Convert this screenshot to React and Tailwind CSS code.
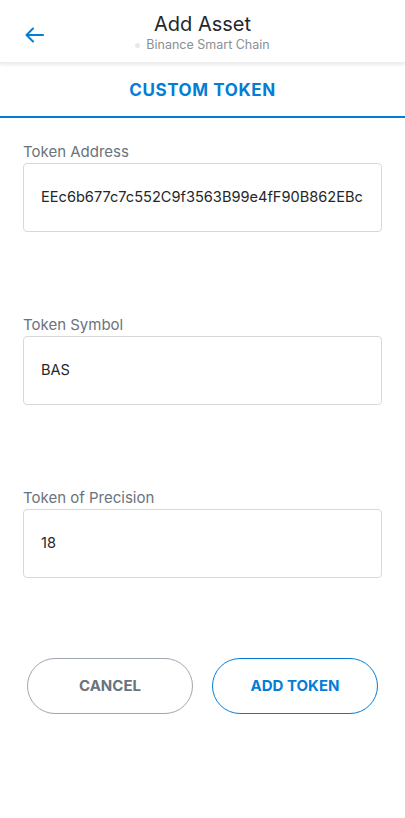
import React from "react";

function Field({ label, value }) {
  return (
    <div className="flex flex-col">
      <div className="text-[15px] leading-[20px] text-[#6a737d] mb-[1px]">{label}</div>
      <div className="h-[69px] border border-[#d6d9dc] rounded-[4px] flex items-center pl-[17px] text-[14.6px] text-[#24272a]">
        {value}
      </div>
    </div>
  );
}

export default function App() {
  return (
    <div className="w-[405px] h-[818px] bg-white flex flex-col" style={{ fontFamily: "Inter, 'Noto Sans', sans-serif" }}>
      <div className="h-[63px] shrink-0 flex relative shadow-[0_2px_3px_rgba(0,0,0,0.08)] border-b border-[#ececec]">
        <div className="absolute left-[25px] top-[27px]">
          <svg width="19" height="16" viewBox="0 0 19 16" fill="none" stroke="#037dd6" strokeWidth="2" strokeLinecap="round" strokeLinejoin="round">
            <path d="M18 8H2" />
            <path d="M8 1.5L1.5 8 8 14.5" />
          </svg>
        </div>
        <div className="flex-1 flex flex-col items-center pt-[12px]">
          <div className="text-[20px] leading-[24px] text-[#24272a]">Add Asset</div>
          <div className="flex items-center gap-[6px] text-[12.5px] leading-[16px] text-[#8a8f94] mt-[1px]">
            <span className="w-[5px] h-[5px] rounded-full bg-[#e6e8ea]" />
            <span>Binance Smart Chain</span>
          </div>
        </div>
      </div>
      <div className="h-[55px] shrink-0 flex items-center justify-center border-b-2 border-[#037dd6] pt-[3px]">
        <span className="text-[17px] font-bold tracking-[0.6px] text-[#037dd6]">CUSTOM TOKEN</span>
      </div>
      <div className="flex flex-col px-[23px] pt-[24px] gap-[83px]">
        <Field label="Token Address" value="EEc6b677c7c552C9f3563B99e4fF90B862EBc" />
        <Field label="Token Symbol" value="BAS" />
        <Field label="Token of Precision" value="18" />
      </div>
      <div className="flex gap-[19px] px-[27px] mt-[80px]">
        <button className="flex-1 h-[56px] rounded-full border border-[#9fa6ae] text-[15px] font-bold text-[#6a737d]">CANCEL</button>
        <button className="flex-1 h-[56px] rounded-full border border-[#037dd6] text-[15px] font-bold text-[#037dd6]">ADD TOKEN</button>
      </div>
    </div>
  );
}
